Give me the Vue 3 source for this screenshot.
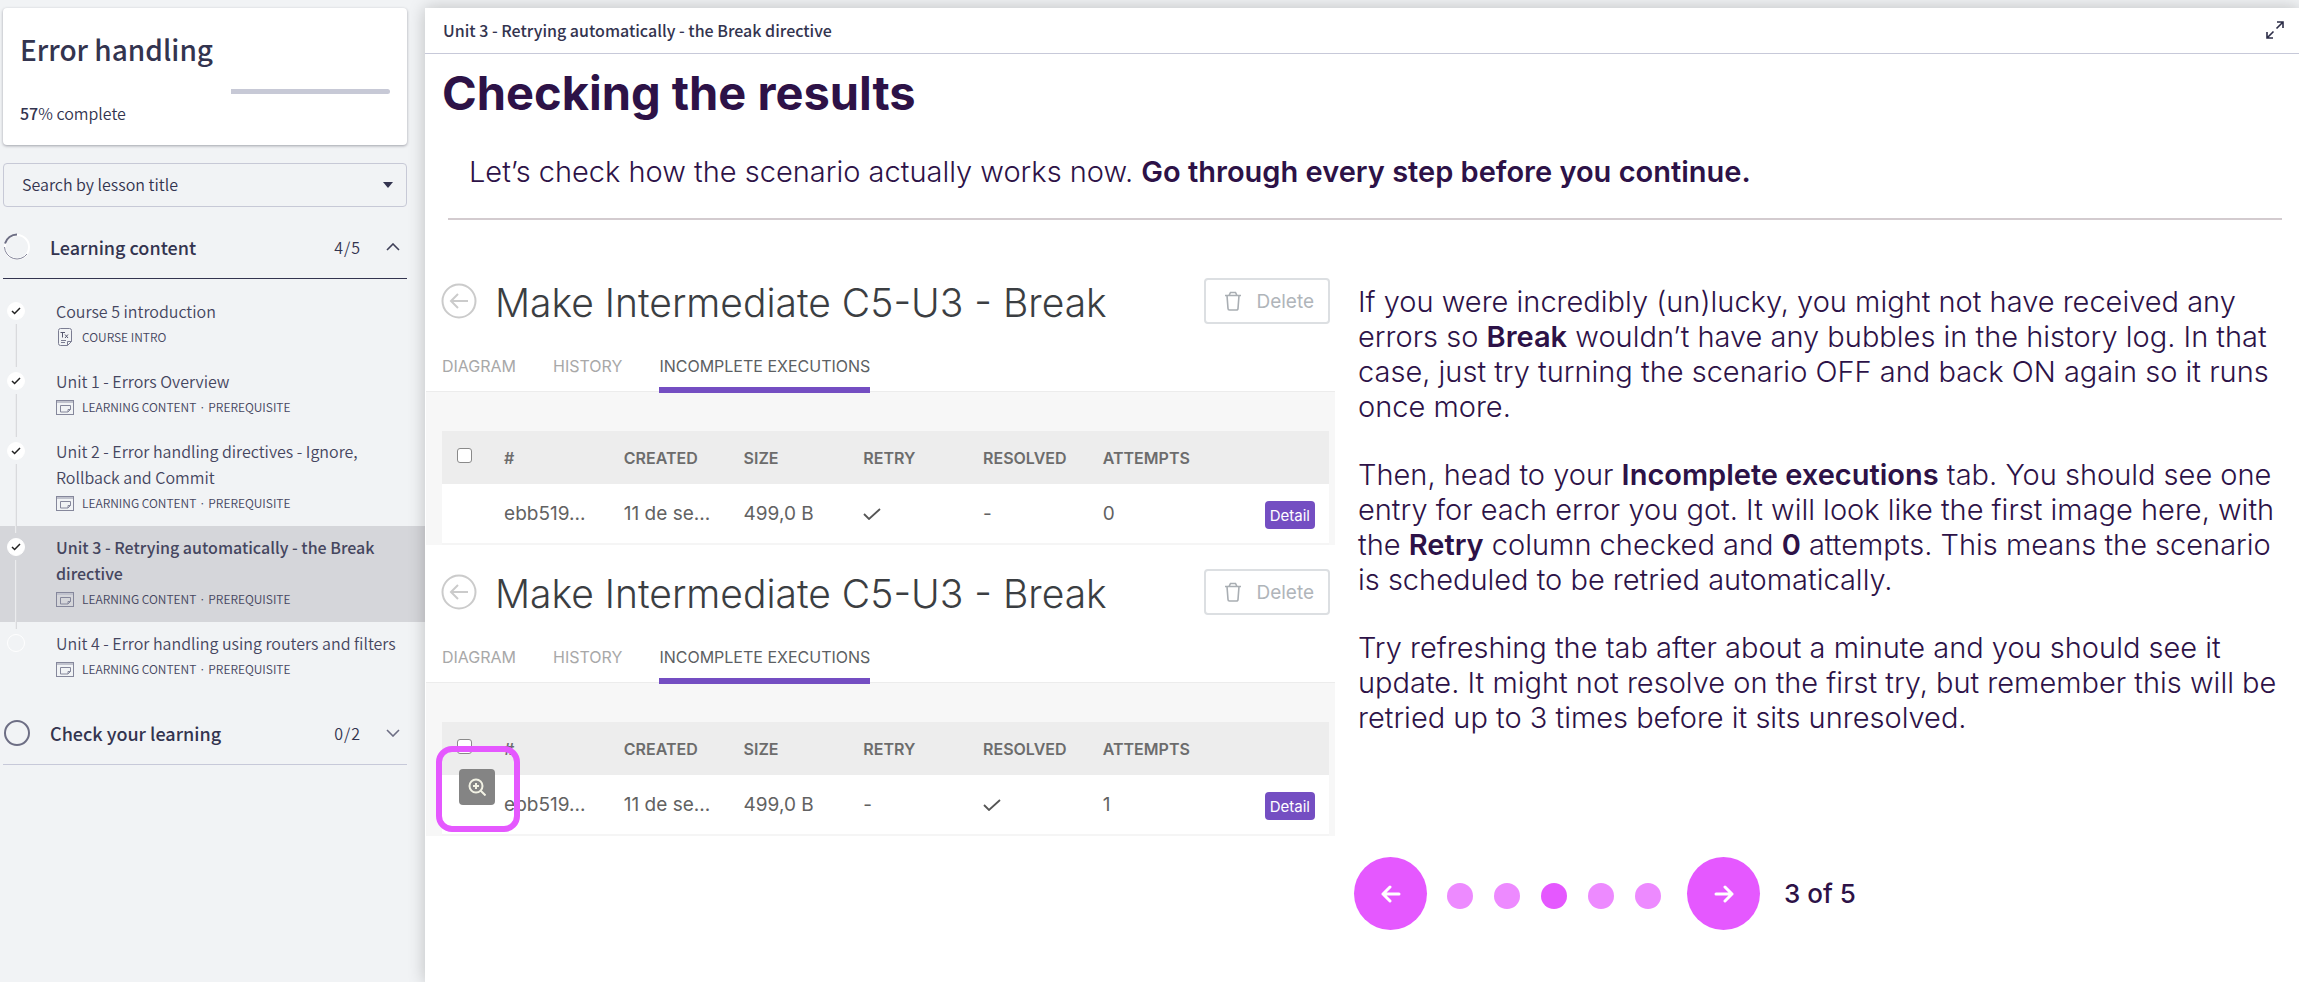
<script setup>
import { ref } from 'vue'

const search = ref('')
const lessons = [
  { title: 'Course 5 introduction', meta: 'COURSE INTRO', icon: 'doc', done: true },
  { title: 'Unit 1 - Errors Overview', meta: 'LEARNING CONTENT · PREREQUISITE', icon: 'slide', done: true },
  { title: 'Unit 2 - Error handling directives - Ignore, Rollback and Commit', meta: 'LEARNING CONTENT · PREREQUISITE', icon: 'slide', done: true },
  { title: 'Unit 3 - Retrying automatically - the Break directive', meta: 'LEARNING CONTENT · PREREQUISITE', icon: 'slide', done: true, active: true },
  { title: 'Unit 4 - Error handling using routers and filters', meta: 'LEARNING CONTENT · PREREQUISITE', icon: 'slide', done: false }
]
const panels = [
  { id: 'first', retry: true, resolved: false, attempts: 0, zoom: false },
  { id: 'second', retry: false, resolved: true, attempts: 1, zoom: true }
]
const headings = ['#', 'CREATED', 'SIZE', 'RETRY', 'RESOLVED', 'ATTEMPTS']
</script>

<template>
  <div class="page">
    <aside class="sidebar">
      <section class="course-card">
        <h2>Error handling</h2>
        <div class="progress" role="progressbar" aria-label="Course progress" aria-valuenow="57" aria-valuemin="0" aria-valuemax="100">
          <div class="progress-rest" :style="{ width: '43%' }"></div>
        </div>
        <p><strong>57</strong>% complete</p>
      </section>

      <div class="search">
        <select v-model="search" aria-label="Search by lesson title">
          <option value="">Search by lesson title</option>
          <option v-for="l in lessons" :key="l.title" :value="l.title">{{ l.title }}</option>
        </select>
        <svg class="caret" width="10" height="6" viewBox="0 0 10 6" aria-hidden="true"><path d="M0 0h10L5 6z" fill="#33344f" /></svg>
      </div>

      <button class="section-head open" type="button" aria-expanded="true">
        <svg width="28" height="28" viewBox="0 0 28 28" fill="none" aria-hidden="true">
          <circle cx="14" cy="14" r="12" stroke="#fff" stroke-width="2" />
          <path d="M1.5 14A12.5 12.5 0 0 0 24 21" stroke="#85869a" stroke-width="1" />
          <path d="M2 10.500A12.500 12.500 0 0 1 14 1.500" stroke="#6d6e84" stroke-width="2" />
        </svg>
        <span class="section-title">Learning content</span>
        <span class="count">4/5</span>
        <svg width="14" height="8" viewBox="0 0 14 8" fill="none" aria-hidden="true"><path d="M1 7l6-6 6 6" stroke="#3f4058" stroke-width="1.600" /></svg>
      </button>

      <ol class="lessons">
        <li v-for="(l, i) in lessons" :key="l.title" :class="{ active: l.active }">
          <span class="marker">
            <span class="dot" :class="{ done: l.done }">
              <svg v-if="l.done" width="10" height="8" viewBox="0 0 10 8" fill="none" aria-hidden="true"><path d="M1 4l2.600 2.500L9 1" stroke="#222" stroke-width="1.500" /></svg>
            </span>
            <span v-if="i < lessons.length - 1" class="line"></span>
          </span>
          <a href="#" :aria-current="l.active ? 'page' : null">
            <span class="lesson-title">{{ l.title }}</span>
            <span class="meta">
              <svg v-if="l.icon === 'doc'" width="18" height="18" viewBox="0 0 18 18" fill="none" stroke="#7b7d92" aria-hidden="true">
                <path d="M4.500 .5h9a2 2 0 0 1 2 2v11l-4 4h-7a2 2 0 0 1-2-2v-13a2 2 0 0 1 2-2zM15.500 13.500h-4v4M5 12.500h5M5 14.500h4" />
                <path d="M4.500 4.500h4.500M6.500 4.500v5M9 6.500l3 3.500M12 6.500l-3 3.500" stroke="#55576e" />
              </svg>
              <svg v-else width="18" height="15" viewBox="0 0 18 15" fill="none" stroke="#85879b" aria-hidden="true">
                <path d="M1 2h16" stroke="#c0c2cd" stroke-width="2" />
                <rect x=".5" y=".5" width="17" height="14" />
                <path d="M4.500 5.500h10v4l-2.500 2.500H4.500zM14.500 9.500H12V12" />
              </svg>
              <span>{{ l.meta }}</span>
            </span>
          </a>
        </li>
      </ol>

      <button class="section-head" type="button" aria-expanded="false">
        <svg width="28" height="28" viewBox="0 0 28 28" fill="none" aria-hidden="true"><circle cx="14" cy="14" r="12" stroke="#6d6e84" stroke-width="2" /></svg>
        <span class="section-title">Check your learning</span>
        <span class="count">0/2</span>
        <svg width="14" height="8" viewBox="0 0 14 8" fill="none" aria-hidden="true"><path d="M1 1l6 6 6-6" stroke="#6d6e84" stroke-width="1.600" /></svg>
      </button>
    </aside>

    <main class="main">
      <header class="topbar">
        <span>Unit 3 - Retrying automatically - the Break directive</span>
        <button type="button" aria-label="Full screen">
          <svg width="18" height="18" viewBox="0 0 18 18" fill="none" stroke="#2d2e48" stroke-width="1.600" aria-hidden="true">
            <path d="M11 1h6v6M17 1l-6.500 6.500M7 17H1v-6M1 17l6.500-6.500" />
          </svg>
        </button>
      </header>

      <div class="intro">
        <h1>Checking the results</h1>
        <p>Let’s check how the scenario actually works now. <strong>Go through every step before you continue.</strong></p>
      </div>

      <div class="columns">
        <div class="panels">
          <section v-for="p in panels" :key="p.id" class="panel">
            <div class="panel-head">
              <button class="back" type="button" aria-label="Back">
                <svg width="36" height="36" viewBox="0 0 36 36" fill="none" stroke="#cbcbcb" stroke-width="2" aria-hidden="true">
                  <circle cx="18" cy="18" r="16.500" />
                  <path d="M27 18H10M17 11l-7 7 7 7" />
                </svg>
              </button>
              <h2>Make Intermediate C5-U3 - Break</h2>
              <button class="delete" type="button">
                <svg width="18" height="20" viewBox="0 0 18 20" fill="none" stroke="#a9aeb3" stroke-width="1.600" aria-hidden="true">
                  <path d="M1 4.500h16M5 4.500l1.500-3h5l1.500 3M3 4.500l1 13a1.500 1.500 0 0 0 1.500 1.500h7a1.500 1.500 0 0 0 1.500-1.500l1-13" />
                </svg>
                Delete
              </button>
            </div>
            <nav class="tabs">
              <a href="#">DIAGRAM</a>
              <a href="#">HISTORY</a>
              <a href="#" class="current">INCOMPLETE EXECUTIONS</a>
            </nav>
            <div class="panel-body">
              <table>
                <thead>
                  <tr>
                    <th class="pick"><input type="checkbox" aria-label="Select all executions" /></th>
                    <th v-for="h in headings" :key="h" class="cell">{{ h }}</th>
                    <th></th>
                  </tr>
                </thead>
                <tbody>
                  <tr>
                    <td></td>
                    <td>ebb519...</td>
                    <td>11 de se...</td>
                    <td>499,0 B</td>
                    <td v-for="(v, k) in [p.retry, p.resolved]" :key="k">
                      <svg v-if="v" width="18" height="12" viewBox="0 0 18 12" fill="none" role="img" aria-label="Yes"><path d="M1 6l5 5L17 1" stroke="#555" stroke-width="1.800" /></svg>
                      <template v-else>-</template>
                    </td>
                    <td>{{ p.attempts }}</td>
                    <td class="action"><button class="detail" type="button">Detail</button></td>
                  </tr>
                </tbody>
              </table>
            </div>
            <div v-if="p.zoom" class="focus">
              <button type="button" aria-label="Zoom image">
                <svg width="18" height="18" viewBox="0 0 18 18" fill="none" stroke="#f2f2e4" stroke-width="2" aria-hidden="true">
                  <circle cx="8" cy="8" r="6.500" />
                  <path d="M12.500 12.500l5 5M8 5v6M5 8h6" />
                </svg>
              </button>
            </div>
          </section>
        </div>

        <div class="story">
          <p>If you were incredibly (un)lucky, you might not have received any errors so <strong>Break</strong> wouldn’t have any bubbles in the history log. In that case, just try turning the scenario OFF and back ON again so it runs once more.</p>
          <p>Then, head to your <strong>Incomplete executions</strong> tab. You should see one entry for each error you got. It will look like the first image here, with the <strong>Retry</strong> column checked and <strong>0</strong> attempts. This means the scenario is scheduled to be retried automatically.</p>
          <p>Try refreshing the tab after about a minute and you should see it update. It might not resolve on the first try, but remember this will be retried up to 3 times before it sits unresolved.</p>

          <nav class="pager" aria-label="Steps">
            <button class="arrow" type="button" aria-label="Previous step">
              <svg width="20" height="18" viewBox="0 0 20 18" fill="none" stroke="#fff" stroke-width="3" stroke-linecap="round" stroke-linejoin="round" aria-hidden="true"><path d="M18 9H2M9 2L2 9l7 7" /></svg>
            </button>
            <div class="steps">
              <button v-for="n in 5" :key="n" class="step" :class="{ on: n === 3 }" type="button" :aria-label="'Step ' + n"></button>
            </div>
            <button class="arrow" type="button" aria-label="Next step">
              <svg width="20" height="18" viewBox="0 0 20 18" fill="none" stroke="#fff" stroke-width="3" stroke-linecap="round" stroke-linejoin="round" aria-hidden="true"><path d="M2 9h16M11 2l7 7-7 7" /></svg>
            </button>
            <span class="position">3 of 5</span>
          </nav>
        </div>
      </div>
    </main>
  </div>
</template>

<style>
body {
  background: #f1f3f5;
}
</style>

<style scoped>
* {
  box-sizing: border-box;
}
h1, h2, p, ol {
  margin: 0;
  padding: 0;
}
button {
  border: 0;
  padding: 0;
  background: none;
  font: inherit;
  color: inherit;
  cursor: pointer;
}
a {
  color: inherit;
  text-decoration: none;
}
svg {
  display: block;
  flex: none;
}
.page {
  display: flex;
  min-height: 100vh;
  padding-top: 8px;
  overflow: hidden;
  background: #f1f3f5;
  font-family: "Noto Sans CJK JP", "Noto Sans", sans-serif;
  color: #33344f;
}
.sidebar {
  flex: none;
  width: 425px;
}
.course-card {
  margin: 0 18px 18px 3px;
  height: 137px;
  padding: 20px 17px;
  background: #fff;
  border-radius: 4px;
  box-shadow: 0 1px 3px rgba(40, 42, 60, 0.4);
}
.course-card h2 {
  font-size: 28px;
  font-weight: 500;
  line-height: 42px;
}
.progress {
  display: flex;
  justify-content: flex-end;
  margin-top: 19px;
}
.progress-rest {
  height: 5px;
  border-radius: 0 3px 3px 0;
  background: #c7c9d6;
}
.course-card p {
  margin-top: 7px;
  font-size: 16px;
  font-weight: 350;
  line-height: 24px;
}
.course-card strong {
  font-weight: 500;
}
.search {
  position: relative;
  margin: 0 18px 10px 3px;
}
.search select {
  display: block;
  width: 100%;
  height: 44px;
  padding: 0 40px 2px 18px;
  border: 1px solid #c7c9d6;
  border-radius: 4px;
  appearance: none;
  background: transparent;
  font-family: inherit;
  font-size: 16px;
  font-weight: 350;
  color: #33344f;
}
.caret {
  position: absolute;
  right: 14px;
  top: 19px;
  pointer-events: none;
}
.section-head {
  display: flex;
  align-items: center;
  width: 404px;
  height: 62px;
  margin-left: 3px;
  padding: 0 7px 2px 0;
  border-bottom: 1px solid #c7c9d9;
  text-align: left;
}
.section-head.open {
  border-bottom-color: #33344f;
}
.section-title {
  flex: 1;
  margin-left: 19px;
  font-size: 18px;
  font-weight: 500;
}
.count {
  margin-right: 25px;
  font-size: 16px;
  font-weight: 350;
  letter-spacing: 1px;
}
.lessons {
  padding: 11px 0;
  list-style: none;
}
.lessons li {
  display: flex;
  padding: 8px 24px 10px 7px;
}
.lessons li.active {
  background: #d5d6da;
}
.marker {
  display: flex;
  flex: none;
  flex-direction: column;
  align-items: center;
  width: 18px;
  margin-right: 31px;
}
.dot {
  display: flex;
  align-items: center;
  justify-content: center;
  width: 18px;
  height: 18px;
  margin-top: 4px;
  border: 1px solid #fff;
  border-radius: 50%;
}
.dot.done {
  background: #fff;
}
.line {
  flex: 1;
  width: 2px;
  margin: 4px 0 -17px;
  border-left: 1px solid #ebecee;
  border-right: 1px solid #d9dadd;
}
.lessons a {
  flex: 1;
  font-size: 16px;
  font-weight: 350;
  line-height: 26px;
  color: #45465f;
}
.lesson-title {
  display: block;
}
.active .lesson-title {
  font-weight: 500;
}
.meta {
  display: flex;
  align-items: center;
  gap: 8px;
  height: 26px;
  font-size: 12px;
}
.main {
  position: relative;
  flex: 1;
  min-width: 0;
  background: #fff;
  box-shadow: 0 0 16px rgba(0, 0, 0, 0.22);
}
.topbar {
  display: flex;
  align-items: center;
  justify-content: space-between;
  height: 46px;
  padding: 0 15px 2px 18px;
  border-bottom: 1px solid #c7c9d9;
  font-size: 16px;
  font-weight: 500;
}
.intro {
  margin: 0 17px 0 23px;
  border-bottom: 2px solid #d3cbcf;
  font-family: Inter, sans-serif;
  color: #2d1247;
}
.intro h1 {
  margin: 8px 0 0 -6px;
  font-size: 47px;
  font-weight: 700;
  line-height: 62px;
}
.intro p {
  padding: 30px 0 28px 21px;
  font-size: 29px;
  font-weight: 300;
  line-height: 36px;
}
.intro strong,
.story strong {
  font-weight: 600;
}
.columns {
  display: grid;
  grid-template-columns: 909fr 941fr;
  gap: 23px;
  padding: 58px 0 40px 1px;
  font-family: Inter, sans-serif;
}
.panels {
  display: flex;
  flex-direction: column;
  gap: 24px;
}
.panel {
  position: relative;
}
.panel-head {
  display: flex;
  align-items: center;
  height: 46px;
  padding: 0 5px 0 15px;
}
.panel-head h2 {
  flex: 1;
  margin-left: 18px;
  padding-top: 3px;
  font-size: 39px;
  font-weight: 300;
  line-height: 46px;
  color: #3b3e42;
}
.delete {
  display: flex;
  align-items: center;
  gap: 14px;
  height: 46px;
  padding: 0 14px 0 18px;
  border: 2px solid #dcdfe2;
  border-radius: 4px;
  font-size: 19px;
  color: #b0b5ba;
}
.tabs {
  display: flex;
  gap: 37px;
  height: 69px;
  padding: 24px 16px 0;
  font-size: 16px;
  line-height: 36px;
  color: #a8a8a8;
}
.tabs a {
  height: 45px;
}
.tabs .current {
  position: relative;
  z-index: 1;
  border-bottom: 6px solid #744ec2;
  color: #5c5f63;
}
.panel-body {
  margin-top: -2px;
  padding: 39px 6px 0 16px;
  border-top: 1px solid #ececec;
  background: #f7f7f7;
}
table {
  width: 100%;
  border-collapse: collapse;
  table-layout: fixed;
  color: #626262;
}
th {
  height: 53px;
  padding: 0;
  background: #ededed;
  font-size: 16px;
  font-weight: 600;
  text-align: left;
  color: #6c6c6c;
}
.pick {
  width: 7%;
}
.cell {
  width: 13.5%;
}
input[type="checkbox"] {
  display: block;
  width: 15px;
  height: 15px;
  margin: 0 0 4px 15px;
  border: 1px solid #8a8a8a;
  border-radius: 3px;
  appearance: none;
  background: #fff;
}
td {
  height: 60px;
  padding: 0;
  border-bottom: 2px solid #f5f5f5;
  background: #fff;
  font-size: 19px;
}
.action {
  padding-top: 3px;
  text-align: right;
}
.detail {
  height: 28px;
  margin-right: 14px;
  padding: 0 5px;
  border-radius: 4px;
  background: #744ec2;
  font-size: 15px;
  font-weight: 400;
  color: #fff;
}
.focus {
  position: absolute;
  left: 10px;
  top: 177px;
  display: flex;
  width: 84px;
  height: 86px;
  padding: 17px;
  border: 6px solid #e558ff;
  border-radius: 16px;
}
.focus button {
  display: flex;
  align-items: center;
  justify-content: center;
  width: 36px;
  height: 36px;
  border-radius: 4px;
  background: #848484;
}
.story {
  padding: 6px 8px 0 0;
  font-size: 29px;
  font-weight: 300;
  line-height: 35px;
  color: #2d1247;
}
.story p {
  margin-bottom: 33px;
}
.pager {
  display: flex;
  align-items: center;
  margin: 122px 0 0 -4px;
}
.arrow {
  display: flex;
  align-items: center;
  justify-content: center;
  width: 73px;
  height: 73px;
  border-radius: 50%;
  background: #e558ff;
}
.steps {
  display: flex;
  gap: 21px;
  margin: 4px 26px 0 20px;
}
.step {
  width: 26px;
  height: 26px;
  border-radius: 50%;
  background: #ed8aff;
}
.step.on {
  background: #e558ff;
}
.position {
  margin-left: 24px;
  font-size: 26px;
  font-weight: 500;
}
</style>
